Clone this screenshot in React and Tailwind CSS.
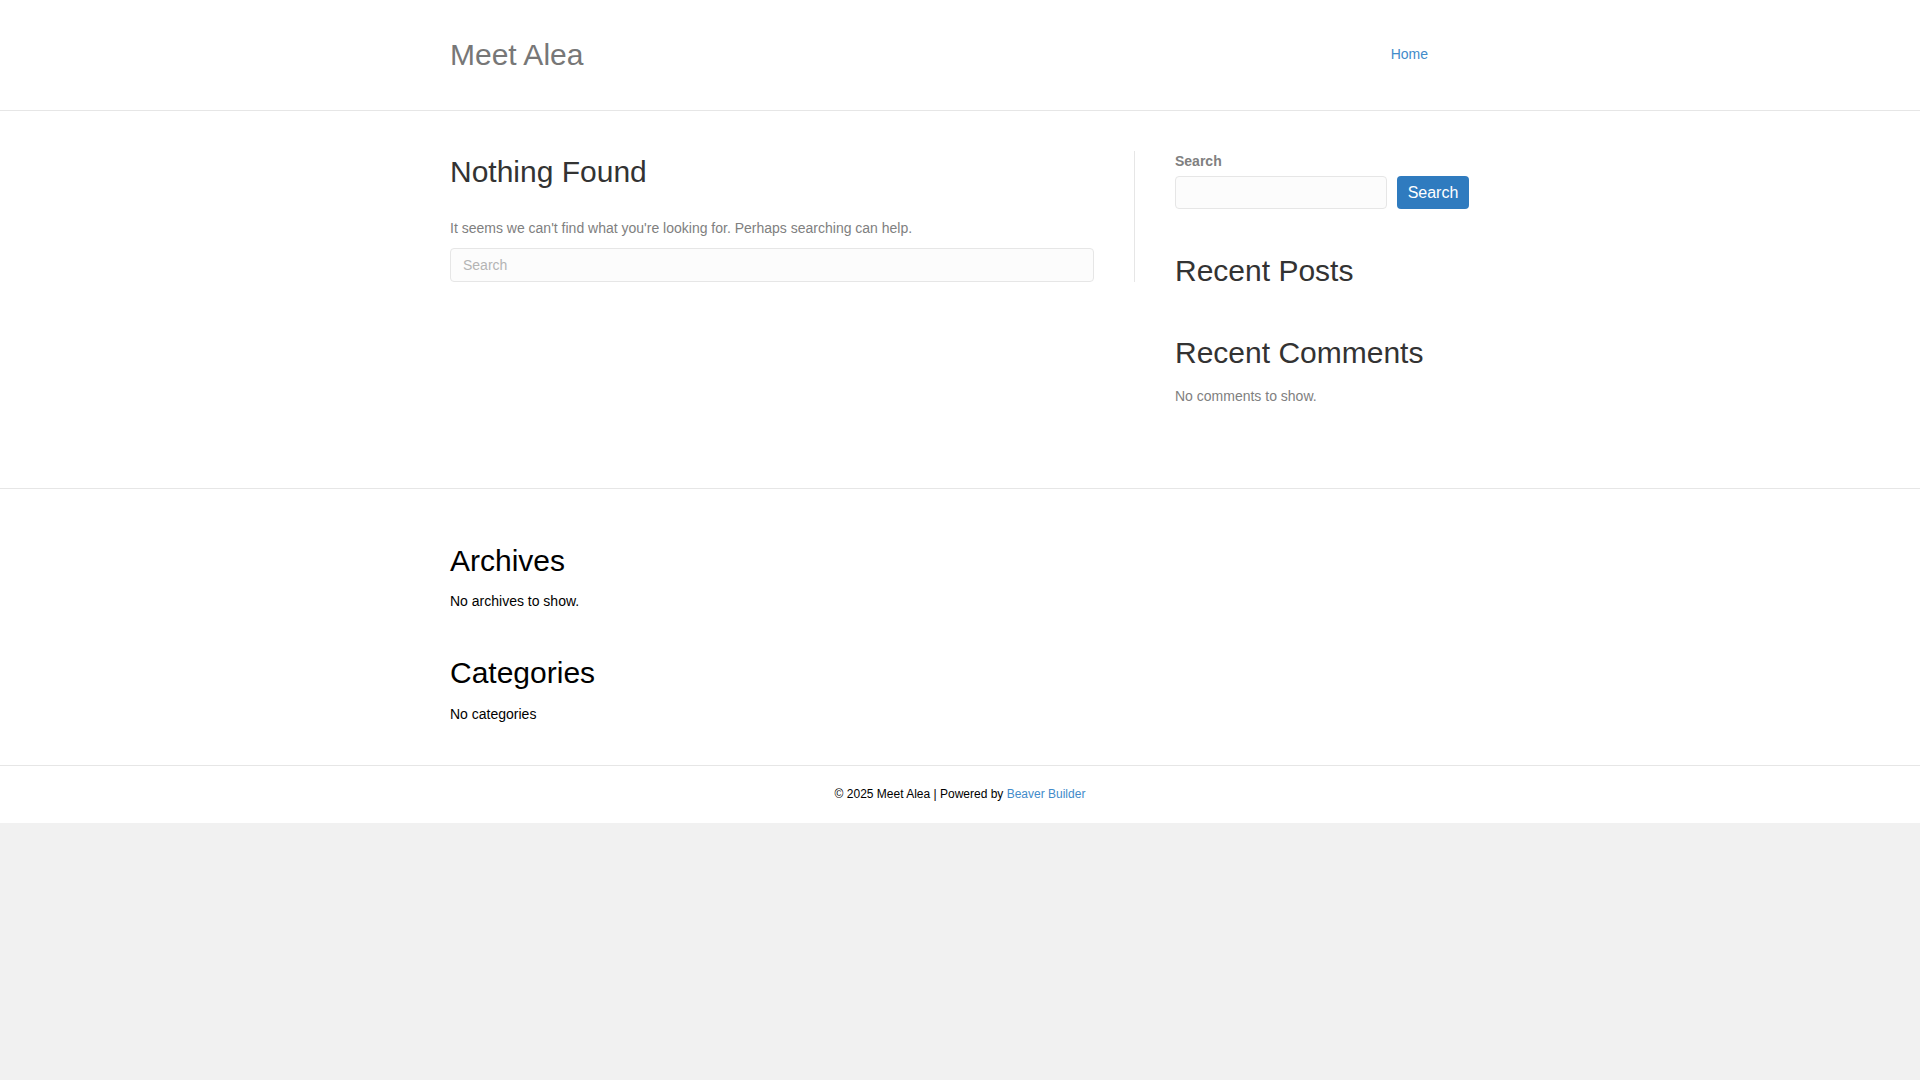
function App() {
  return (
    <div className="min-h-screen bg-[#f1f1f1] font-['Liberation_Sans',Arial,sans-serif]">
      <div className="bg-white">
        <header className="border-b border-[#e6e6e6]">
          <div className="mx-auto w-[1020px] h-[110px] flex items-center justify-between">
            <a href="#" className="block mb-[2px] text-[30px] leading-[33px] text-[#777]">Meet Alea</a>
            <nav>
              <a href="#" className="block mb-[2px] mr-[42px] text-[14px] leading-[20px] text-[#428bca]">Home</a>
            </nav>
          </div>
        </header>

        <main className="pt-[40px] pb-[82px]">
          <div className="mx-auto w-[1020px] flex items-start">
            <div className="w-[685px] pr-[40px] border-r border-[#e6e6e6]">
              <h1 className="mt-[4px] text-[30px] leading-[33px] text-[#333]">Nothing Found</h1>
              <p className="mt-[30px] text-[14px] leading-[20px] text-[#808080]">
                It seems we can't find what you're looking for. Perhaps searching can help.
              </p>
              <input
                type="text"
                placeholder="Search"
                className="mt-[10px] block w-full h-[34px] px-[12px] rounded-[4px] border border-[#e6e6e6] bg-[#fcfcfc] text-[14px] text-[#333] placeholder:text-[#b4b4b4] outline-none"
              />
            </div>

            <aside className="flex-1 pl-[40px]">
              <label className="block text-[14px] leading-[20px] font-bold text-[#808080]">Search</label>
              <div className="mt-[5px] flex gap-[10px]">
                <input
                  type="text"
                  className="w-[212px] h-[33px] px-[12px] rounded-[4px] border border-[#e6e6e6] bg-[#fcfcfc] outline-none"
                />
                <button className="w-[72px] h-[33px] rounded-[4px] bg-[#2f7bbf] text-white text-[16px]">Search</button>
              </div>
              <h2 className="mt-[45px] text-[30px] leading-[33px] text-[#333]">Recent Posts</h2>
              <h2 className="mt-[49px] text-[30px] leading-[33px] text-[#333]">Recent Comments</h2>
              <p className="mt-[17px] text-[14px] leading-[20px] text-[#808080]">No comments to show.</p>
            </aside>
          </div>
        </main>

        <section className="border-t border-b border-[#e6e6e6] pt-[55px] pb-[41px]">
          <div className="mx-auto w-[1020px]">
            <h2 className="text-[30px] leading-[33px] text-black">Archives</h2>
            <p className="mt-[14px] text-[14px] leading-[20px] text-black">No archives to show.</p>
            <h2 className="mt-[45px] text-[30px] leading-[33px] text-black">Categories</h2>
            <p className="mt-[15px] text-[14px] leading-[20px] text-black">No categories</p>
          </div>
        </section>

        <footer className="py-[20px] text-center text-[12px] leading-[17px] text-black">
          © 2025 Meet Alea | Powered by <a href="#" className="text-[#428bca]">Beaver Builder</a>
        </footer>
      </div>
    </div>
  )
}

export default App
